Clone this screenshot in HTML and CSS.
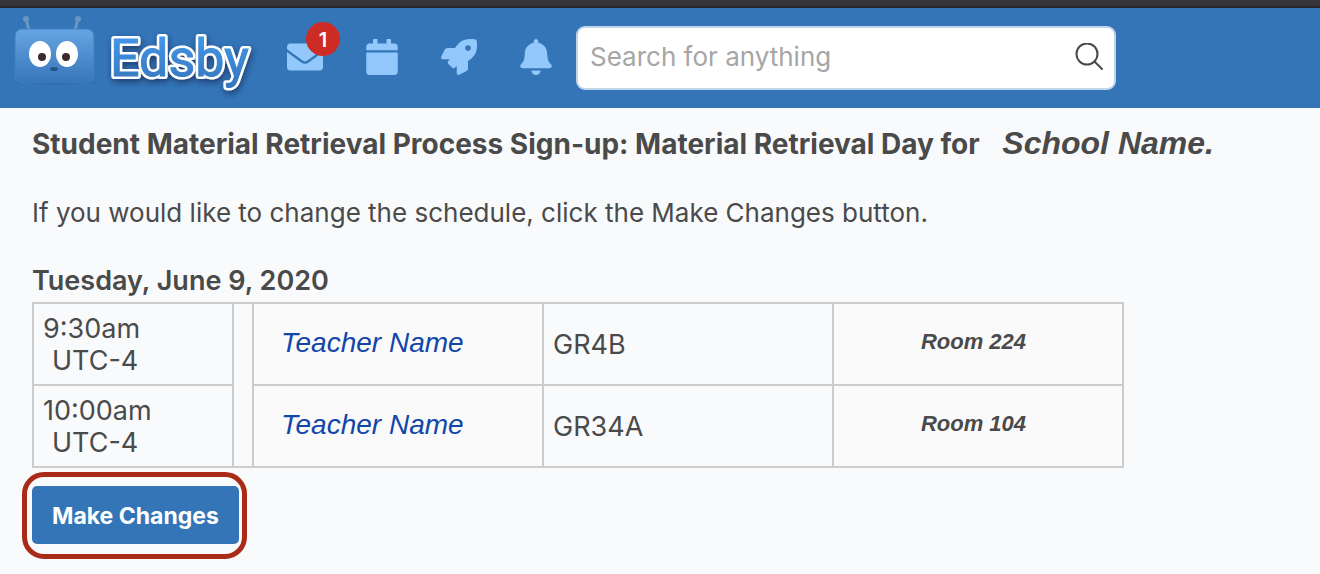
FILE: index.html
```html
<!DOCTYPE html>
<html lang="en">
<head>
    <meta charset="UTF-8">
    <meta name="viewport" content="width=device-width, initial-scale=1.0">
    <title>Edsby</title>
    <link rel="stylesheet" href="styles.css">
</head>
<body>
    <header class="header">
        <a class="logo" href="#" aria-label="Edsby home">
            <svg width="260" height="92" viewBox="0 8 260 92">
                <defs>
                    <linearGradient id="robot" x1="0" y1="0" x2="0" y2="1">
                        <stop offset="0" stop-color="#67a4e2"/>
                        <stop offset="1" stop-color="#3676ba"/>
                    </linearGradient>
                    <linearGradient id="word" gradientUnits="userSpaceOnUse" x1="0" y1="36" x2="0" y2="90">
                        <stop offset="0" stop-color="#4596e8"/>
                        <stop offset="1" stop-color="#3373b8"/>
                    </linearGradient>
                    <radialGradient id="ground">
                        <stop offset="0" stop-color="#1d4675"/>
                        <stop offset="1" stop-color="#1d4675" stop-opacity="0"/>
                    </radialGradient>
                    <filter id="shadow" x="-10%" y="-20%" width="120%" height="150%">
                        <feDropShadow dx="1" dy="3" stdDeviation="3" flood-color="#12335c" flood-opacity="0.8"/>
                    </filter>
                </defs>
                <!-- robot -->
                <ellipse cx="55" cy="82" rx="46" ry="3" fill="url(#ground)"/>
                <path d="M26 19l3 11M78 19l-3 11" stroke="#6798c4" stroke-width="3"/>
                <circle cx="26" cy="19" r="3" fill="#6798c4"/>
                <circle cx="78" cy="19" r="3" fill="#6798c4"/>
                <rect x="15" y="29" width="79" height="54" rx="7" fill="url(#robot)" stroke="#3e7fc3"/>
                <ellipse cx="40" cy="54" rx="11" ry="13" fill="#fff"/>
                <ellipse cx="67" cy="54" rx="11" ry="13" fill="#fff"/>
                <circle cx="42" cy="57" r="4" fill="#3d2a2c"/>
                <circle cx="66" cy="57" r="4" fill="#3d2a2c"/>
                <ellipse cx="54" cy="69" rx="4" ry="2" fill="#255587"/>
                <!-- wordmark -->
                <g filter="url(#shadow)">
                    <text class="wordmark wordmark-edge" x="110" y="76">Edsby</text>
                    <text class="wordmark" x="110" y="76" fill="url(#word)" stroke="url(#word)">Edsby</text>
                </g>
            </svg>
        </a>
        <nav class="nav">
            <a class="nav-item" href="#" aria-label="Messages">
                <svg class="icon" viewBox="0 0 512 512"><path d="M502.3 190.8c3.9-3.1 9.7-.2 9.7 4.7V400c0 26.5-21.5 48-48 48H48c-26.5 0-48-21.5-48-48V195.6c0-5 5.7-7.8 9.7-4.7 22.4 17.4 52.1 39.5 154.1 113.6 21.1 15.4 56.7 47.8 92.2 47.6 35.7.3 72-32.8 92.3-47.6 102-74.1 131.6-96.3 154-113.7zM256 320c23.2.4 56.6-29.2 73.4-41.4 132.7-96.3 142.8-104.7 173.4-128.7 5.8-4.5 9.2-11.5 9.2-18.9v-19c0-26.5-21.5-48-48-48H48c-26.5 0-48 21.5-48 48v19c0 7.4 3.4 14.3 9.2 18.9 30.6 23.9 40.7 32.4 173.4 128.7 16.8 12.2 50.2 41.8 73.4 41.4z"/></svg>
                <span class="badge">1</span>
            </a>
            <a class="nav-item" href="#" aria-label="Calendar">
                <svg class="icon" viewBox="-32 0 512 512"><path d="M12 192h424c6.600 0 12 5.400 12 12v260c0 26.500-21.500 48-48 48H48c-26.500 0-48-21.500-48-48V204c0-6.600 5.400-12 12-12zm436-44v-36c0-26.500-21.500-48-48-48h-48V12c0-6.600-5.400-12-12-12h-40c-6.600 0-12 5.400-12 12v52H160V12c0-6.600-5.400-12-12-12h-40c-6.600 0-12 5.400-12 12v52H48C21.500 64 0 85.500 0 112v36c0 6.600 5.400 12 12 12h424c6.600 0 12-5.400 12-12z"/></svg>
            </a>
            <a class="nav-item" href="#" aria-label="Launch">
                <svg class="icon" viewBox="0 0 512 512"><path d="M505.120 19.094c-1.190-5.531-6.658-11-12.207-12.188C460.716 0 435.507 0 410.407 0 307.175 0 245.269 55.203 199.052 128H94.838c-16.348.016-35.557 11.875-42.887 26.484L2.516 253.297A28.400 28.400 0 0 0 0 264a24 24 0 0 0 24 24h103.816l-22.475 22.469c-11.365 11.361-12.996 32.258 0 45.250l50.905 50.906c11.156 11.188 32.156 13.156 45.277 0l22.475-22.469V488a24 24 0 0 0 24 24 28.560 28.560 0 0 0 10.707-2.516l98.728-49.390c14.629-7.297 26.508-26.500 26.508-42.860V312.797c72.598-46.313 128.035-108.406 128.035-211.094.1-25.203.1-50.406-6.856-82.609zM384.040 168A40 40 0 1 1 424.050 128a40.023 40.023 0 0 1-40.010 40z"/></svg>
            </a>
            <a class="nav-item" href="#" aria-label="Notifications">
                <svg class="icon" viewBox="-32 0 512 512"><path d="M224 512c35.320 0 63.970-28.650 63.970-64H160.030c0 35.350 28.650 64 63.970 64zm215.390-149.710c-19.320-20.760-55.470-51.990-55.470-154.290 0-77.700-54.480-139.900-127.940-155.160V32c0-17.670-14.320-32-31.980-32s-31.980 14.330-31.980 32v20.840C118.560 68.100 64.080 130.300 64.080 208c0 102.300-36.150 133.530-55.470 154.290-6 6.450-8.660 14.160-8.610 21.710.11 16.400 12.980 32 32.100 32h383.800c19.120 0 32-15.600 32.100-32 .05-7.550-2.610-15.270-8.610-21.710z"/></svg>
            </a>
        </nav>
        <form class="search">
            <input class="search-input" type="text" placeholder="Search for anything" aria-label="Search for anything">
            <button class="search-button" type="button" aria-label="Search">
                <svg width="28" height="28" viewBox="0 0 28 28" fill="none" stroke="#4a4a4a" stroke-width="2" stroke-linecap="round">
                    <circle cx="12" cy="11" r="10.500"/>
                    <path d="M19.500 18.500l7.500 7.500"/>
                </svg>
            </button>
        </form>
    </header>

    <main class="content">
        <h1 class="title">Student Material Retrieval Process Sign-up: Material Retrieval Day for <em class="school">School Name.</em></h1>
        <p class="intro">If you would like to change the schedule, click the Make Changes button.</p>
        <h2 class="date">Tuesday, June 9, 2020</h2>

        <table class="schedule">
            <colgroup>
                <col class="col-time">
                <col class="col-gap">
                <col>
                <col>
                <col>
            </colgroup>
            <tbody>
                <tr>
                    <td>9:30am <span class="zone">UTC-4</span></td>
                    <td class="gap" rowspan="2"></td>
                    <td class="teacher"><a href="#">Teacher Name</a></td>
                    <td>GR4B</td>
                    <td class="room">Room 224</td>
                </tr>
                <tr>
                    <td>10:00am <span class="zone">UTC-4</span></td>
                    <td class="teacher"><a href="#">Teacher Name</a></td>
                    <td>GR34A</td>
                    <td class="room">Room 104</td>
                </tr>
            </tbody>
        </table>

        <div class="highlight">
            <button class="button" type="button">Make Changes</button>
        </div>
    </main>
</body>
</html>
```
FILE: styles.css
```css
* {
    margin: 0;
    padding: 0;
    box-sizing: border-box;
}

body {
    font-family: Inter, "Liberation Sans", sans-serif;
    font-size: 26px;
    line-height: 32px;
    color: #4a4a4a;
    background: #f9fafc;
    border-top: 6px solid #353539;
}

.header {
    display: flex;
    align-items: center;
    height: 102px;
    background: #3475b8;
    border-top: 2px solid #262628;
}

.logo {
    display: block;
    height: 100px;
}

.logo svg {
    display: block;
}

.wordmark {
    font-family: Roboto, sans-serif;
    font-size: 52px;
    stroke-width: 1px;
}

.wordmark-edge {
    fill: #24507f;
    stroke: #fff;
    stroke-width: 6px;
    stroke-linejoin: round;
}

.nav {
    display: flex;
    gap: 41px;
    margin: 0 22px 2px 27px;
}

.nav-item {
    position: relative;
    display: block;
}

.icon {
    display: block;
    width: 36px;
    height: 36px;
    fill: #92c8fb;
}

.badge {
    position: absolute;
    top: -17px;
    left: 19px;
    width: 34px;
    height: 34px;
    border-radius: 50%;
    background: #cc2c24;
    color: #fff;
    font-size: 20px;
    font-weight: 600;
    line-height: 36px;
    text-align: center;
}

.search {
    display: flex;
    align-items: center;
    flex: 0 1 540px;
    height: 64px;
    padding: 0 11px 2px 12px;
    background: #fff;
    border: 2px solid #c1d5ea;
    border-radius: 9px;
}

.search-input {
    flex: 1;
    min-width: 0;
    border: none;
    outline: none;
    background: none;
    font: inherit;
    color: #4a4a4a;
}

.search-input::placeholder {
    color: #a6a6a6;
}

.search-button {
    border: none;
    background: none;
    cursor: pointer;
}

.search-button svg {
    display: block;
}

.content {
    padding: 20px 32px 16px;
}

.title {
    font-size: 28px;
    font-weight: 700;
}

.date {
    font-size: 27px;
    font-weight: 600;
}

.school {
    margin-left: 16px;
    font-family: "Liberation Sans", sans-serif;
    font-size: 32px;
    line-height: 24px;
}

.intro {
    margin: 37px 0 36px;
}

.schedule {
    width: 100%;
    max-width: 1092px;
    table-layout: fixed;
    border-collapse: collapse;
    margin-top: 5px;
    font-size: 27px;
}

.col-time {
    width: 200px;
}

.col-gap {
    width: 20px;
}

.schedule td {
    height: 82px;
    padding: 9px 9px 7px;
    border: 2px solid #cccccc;
    vertical-align: middle;
}

.schedule .gap {
    padding: 0;
}

.zone {
    display: block;
    padding-left: 9px;
}

.schedule .teacher {
    padding: 0 27px 2px;
    background: #fafafa;
    font-family: "Liberation Sans", sans-serif;
    font-size: 28px;
    font-style: italic;
}

.teacher a {
    color: #1246a8;
    text-decoration: none;
}

.schedule .room {
    padding: 0 18px 4px 9px;
    background: #fafafa;
    font-family: "Liberation Sans", sans-serif;
    font-size: 22px;
    font-style: italic;
    font-weight: bold;
    text-align: center;
}

.highlight {
    width: fit-content;
    margin: 4px 0 0 -10px;
    padding: 9px 3px 10px 5px;
    border: 5px solid #a92b17;
    border-radius: 22px;
}

.button {
    display: block;
    height: 58px;
    padding: 2px 20px 0;
    border: none;
    border-radius: 5px;
    background: #3475b8;
    color: #fff;
    font: inherit;
    font-size: 23px;
    font-weight: 700;
    cursor: pointer;
}

.button:hover {
    background: #2c66a2;
}
```
